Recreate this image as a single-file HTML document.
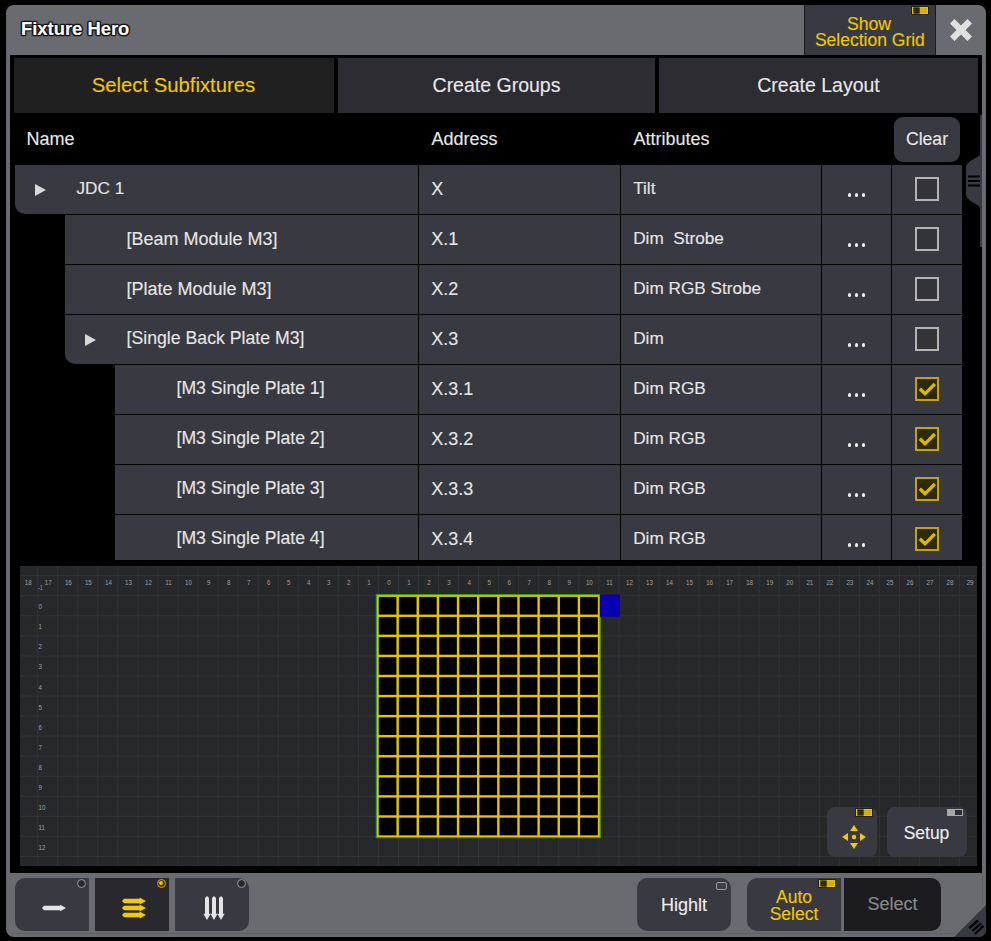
<!DOCTYPE html>
<html><head><meta charset="utf-8"><style>
html,body{margin:0;padding:0;background:#000;width:991px;height:941px;overflow:hidden;}
.r{position:absolute;}
.t{position:absolute;white-space:nowrap;line-height:1;font-family:"Liberation Sans", sans-serif;-webkit-text-stroke:0.12px currentColor;}
</style></head><body>
<div class="r" style="left:6px;top:5px;width:980px;height:932px;background:#6a6b70;border-radius:8px;"></div><div class="r" style="left:10px;top:55px;width:972px;height:818px;background:#000;"></div><div class="t" style="left:21.0px;top:20.2px;font-size:18.4px;color:#ffffff;font-weight:bold;text-shadow:1px 0 1px #111,-1px 0 1px #111,0 1px 1px #111,0 -1px 1px #111,1px 1px 1px #111,-1px -1px 1px #111,1px -1px 1px #111,-1px 1px 1px #111;">Fixture Hero</div><div class="r" style="left:804px;top:5px;width:1px;height:50px;background:#1a1a1e;"></div><div class="r" style="left:805px;top:5px;width:130px;height:50px;background:#393941;"></div><div class="r" style="left:935px;top:5px;width:1px;height:50px;background:#1a1a1e;"></div><div class="t" style="left:804.0px;width:130px;text-align:center;top:16.0px;font-size:17.7px;color:#f2c800;font-weight:normal;">Show</div><div class="t" style="left:804.9px;width:130px;text-align:center;top:32.2px;font-size:17.5px;color:#f2c800;font-weight:normal;">Selection Grid</div><div class="r" style="left:912px;top:7px;width:15.8px;height:7.3px;box-sizing:border-box;border:1px solid #e8c400;background:#d4b000;box-shadow:0 0 0 0.8px rgba(0,0,0,0.55)"><div class="r" style="left:0.8px;top:0.4px;width:5.6px;height:4.6px;background:#2e2a06;box-shadow:0 0 0 0.6px #1a1600"></div></div><svg class="r" style="left:950px;top:19px" width="22" height="22" viewBox="0 0 22 22"><path d="M4.5 0 L11 6.5 L17.5 0 L22 4.5 L15.5 11 L22 17.5 L17.5 22 L11 15.5 L4.5 22 L0 17.5 L6.5 11 L0 4.5 Z" fill="#e0e0e0"/></svg><div class="r" style="left:14px;top:58px;width:320px;height:55px;background:#202020;"></div><div class="r" style="left:338px;top:58px;width:317px;height:55px;background:#2c2c32;"></div><div class="r" style="left:659px;top:58px;width:319px;height:55px;background:#2c2c32;"></div><div class="t" style="left:13.4px;width:320px;text-align:center;top:75.1px;font-size:20.3px;color:#f2c800;font-weight:normal;">Select Subfixtures</div><div class="t" style="left:338.0px;width:317px;text-align:center;top:75.7px;font-size:19.5px;color:#e8e8e8;font-weight:normal;">Create Groups</div><div class="t" style="left:659.0px;width:319px;text-align:center;top:75.7px;font-size:19.5px;color:#e8e8e8;font-weight:normal;">Create Layout</div><div class="t" style="left:26.5px;top:129.5px;font-size:18px;color:#e8e8e8;font-weight:normal;">Name</div><div class="t" style="left:431.5px;top:129.5px;font-size:18px;color:#e8e8e8;font-weight:normal;">Address</div><div class="t" style="left:633.5px;top:129.5px;font-size:18px;color:#e8e8e8;font-weight:normal;">Attributes</div><div class="r" style="left:894px;top:117px;width:66px;height:45px;background:#393941;border-radius:9px;"></div><div class="t" style="left:894.0px;width:66px;text-align:center;top:130.7px;font-size:17.6px;color:#e8e8e8;font-weight:normal;">Clear</div><div class="r" style="left:980px;top:115px;width:2px;height:132px;background:#393941;"></div><svg class="r" style="left:964px;top:150px" width="18" height="62" viewBox="0 0 18 62"><path d="M16 0 L16 4 C 16 8, 2 10, 2 18 L2 44 C 2 52, 16 54, 16 58 L16 62 L18 62 L18 0 Z" fill="#393941"/><rect x="4" y="25.5" width="12" height="2" fill="#000"/><rect x="4" y="30" width="12" height="2" fill="#000"/><rect x="4" y="34.5" width="12" height="2" fill="#000"/></svg><div class="r" style="left:0;top:165px;width:991px;height:395px;overflow:hidden"><div class="r" style="left:15px;top:0px;width:403px;height:49px;background:#393941;border-bottom-left-radius:10px;"></div><div class="r" style="left:419px;top:0px;width:201px;height:49px;background:#393941;"></div><div class="r" style="left:621px;top:0px;width:200px;height:49px;background:#393941;"></div><div class="r" style="left:822px;top:0px;width:69px;height:49px;background:#393941;"></div><div class="r" style="left:892px;top:0px;width:70px;height:49px;background:#393941;"></div><svg class="r" style="left:35px;top:19px" width="11" height="12" viewBox="0 0 11 12"><path d="M0 0 L11 6 L0 12 Z" fill="#d8d8d8"/></svg><div class="t" style="left:76.5px;top:15.2px;font-size:17.2px;color:#e6e6e6;font-weight:normal;">JDC 1</div><div class="t" style="left:431.2px;top:14.6px;font-size:18px;color:#e6e6e6;font-weight:normal;">X</div><div class="t" style="left:633.2px;top:15.2px;font-size:17.2px;color:#e6e6e6;font-weight:normal;white-space:pre;">Tilt</div><div class="r" style="left:847.7px;top:28.2px;width:3.6px;height:3.6px;border-radius:50%;background:#f0f0f0"></div><div class="r" style="left:854.7px;top:28.2px;width:3.6px;height:3.6px;border-radius:50%;background:#f0f0f0"></div><div class="r" style="left:861.7px;top:28.2px;width:3.6px;height:3.6px;border-radius:50%;background:#f0f0f0"></div><div class="r" style="left:915px;top:12px;width:20px;height:20px;border:2px solid #b4b4b4;background:#333338"></div><div class="r" style="left:65px;top:50px;width:353px;height:49px;background:#393941;"></div><div class="r" style="left:419px;top:50px;width:201px;height:49px;background:#393941;"></div><div class="r" style="left:621px;top:50px;width:200px;height:49px;background:#393941;"></div><div class="r" style="left:822px;top:50px;width:69px;height:49px;background:#393941;"></div><div class="r" style="left:892px;top:50px;width:70px;height:49px;background:#393941;"></div><div class="t" style="left:126.5px;top:64.6px;font-size:18px;color:#e6e6e6;font-weight:normal;">[Beam Module M3]</div><div class="t" style="left:431.2px;top:64.6px;font-size:18px;color:#e6e6e6;font-weight:normal;">X.1</div><div class="t" style="left:633.2px;top:65.2px;font-size:17.2px;color:#e6e6e6;font-weight:normal;white-space:pre;">Dim&nbsp; Strobe</div><div class="r" style="left:847.7px;top:78.2px;width:3.6px;height:3.6px;border-radius:50%;background:#f0f0f0"></div><div class="r" style="left:854.7px;top:78.2px;width:3.6px;height:3.6px;border-radius:50%;background:#f0f0f0"></div><div class="r" style="left:861.7px;top:78.2px;width:3.6px;height:3.6px;border-radius:50%;background:#f0f0f0"></div><div class="r" style="left:915px;top:62px;width:20px;height:20px;border:2px solid #b4b4b4;background:#333338"></div><div class="r" style="left:65px;top:100px;width:353px;height:49px;background:#393941;"></div><div class="r" style="left:419px;top:100px;width:201px;height:49px;background:#393941;"></div><div class="r" style="left:621px;top:100px;width:200px;height:49px;background:#393941;"></div><div class="r" style="left:822px;top:100px;width:69px;height:49px;background:#393941;"></div><div class="r" style="left:892px;top:100px;width:70px;height:49px;background:#393941;"></div><div class="t" style="left:126.5px;top:114.6px;font-size:18px;color:#e6e6e6;font-weight:normal;">[Plate Module M3]</div><div class="t" style="left:431.2px;top:114.6px;font-size:18px;color:#e6e6e6;font-weight:normal;">X.2</div><div class="t" style="left:633.2px;top:115.2px;font-size:17.2px;color:#e6e6e6;font-weight:normal;white-space:pre;">Dim RGB Strobe</div><div class="r" style="left:847.7px;top:128.2px;width:3.6px;height:3.6px;border-radius:50%;background:#f0f0f0"></div><div class="r" style="left:854.7px;top:128.2px;width:3.6px;height:3.6px;border-radius:50%;background:#f0f0f0"></div><div class="r" style="left:861.7px;top:128.2px;width:3.6px;height:3.6px;border-radius:50%;background:#f0f0f0"></div><div class="r" style="left:915px;top:112px;width:20px;height:20px;border:2px solid #b4b4b4;background:#333338"></div><div class="r" style="left:65px;top:150px;width:353px;height:49px;background:#393941;border-bottom-left-radius:10px;"></div><div class="r" style="left:419px;top:150px;width:201px;height:49px;background:#393941;"></div><div class="r" style="left:621px;top:150px;width:200px;height:49px;background:#393941;"></div><div class="r" style="left:822px;top:150px;width:69px;height:49px;background:#393941;"></div><div class="r" style="left:892px;top:150px;width:70px;height:49px;background:#393941;"></div><svg class="r" style="left:85px;top:169px" width="11" height="12" viewBox="0 0 11 12"><path d="M0 0 L11 6 L0 12 Z" fill="#d8d8d8"/></svg><div class="t" style="left:126.5px;top:164.8px;font-size:17.7px;color:#e6e6e6;font-weight:normal;">[Single Back Plate M3]</div><div class="t" style="left:431.2px;top:164.6px;font-size:18px;color:#e6e6e6;font-weight:normal;">X.3</div><div class="t" style="left:633.2px;top:165.2px;font-size:17.2px;color:#e6e6e6;font-weight:normal;white-space:pre;">Dim</div><div class="r" style="left:847.7px;top:178.2px;width:3.6px;height:3.6px;border-radius:50%;background:#f0f0f0"></div><div class="r" style="left:854.7px;top:178.2px;width:3.6px;height:3.6px;border-radius:50%;background:#f0f0f0"></div><div class="r" style="left:861.7px;top:178.2px;width:3.6px;height:3.6px;border-radius:50%;background:#f0f0f0"></div><div class="r" style="left:915px;top:162px;width:20px;height:20px;border:2px solid #b4b4b4;background:#333338"></div><div class="r" style="left:115px;top:200px;width:303px;height:49px;background:#393941;"></div><div class="r" style="left:419px;top:200px;width:201px;height:49px;background:#393941;"></div><div class="r" style="left:621px;top:200px;width:200px;height:49px;background:#393941;"></div><div class="r" style="left:822px;top:200px;width:69px;height:49px;background:#393941;"></div><div class="r" style="left:892px;top:200px;width:70px;height:49px;background:#393941;"></div><div class="t" style="left:176.5px;top:214.9px;font-size:17.65px;color:#e6e6e6;font-weight:normal;">[M3 Single Plate 1]</div><div class="t" style="left:431.2px;top:214.6px;font-size:18px;color:#e6e6e6;font-weight:normal;">X.3.1</div><div class="t" style="left:633.2px;top:215.2px;font-size:17.2px;color:#e6e6e6;font-weight:normal;white-space:pre;">Dim RGB</div><div class="r" style="left:847.7px;top:228.2px;width:3.6px;height:3.6px;border-radius:50%;background:#f0f0f0"></div><div class="r" style="left:854.7px;top:228.2px;width:3.6px;height:3.6px;border-radius:50%;background:#f0f0f0"></div><div class="r" style="left:861.7px;top:228.2px;width:3.6px;height:3.6px;border-radius:50%;background:#f0f0f0"></div><div class="r" style="left:915px;top:212px;width:20px;height:20px;border:2px solid #c2a314;background:#2e2a06"></div><svg class="r" style="left:915px;top:212px" width="24" height="24" viewBox="0 0 24 24"><path d="M4.8 11.8 L10 16.8 L19.8 7" stroke="#dcb800" stroke-width="3.3" fill="none"/></svg><div class="r" style="left:115px;top:250px;width:303px;height:49px;background:#393941;"></div><div class="r" style="left:419px;top:250px;width:201px;height:49px;background:#393941;"></div><div class="r" style="left:621px;top:250px;width:200px;height:49px;background:#393941;"></div><div class="r" style="left:822px;top:250px;width:69px;height:49px;background:#393941;"></div><div class="r" style="left:892px;top:250px;width:70px;height:49px;background:#393941;"></div><div class="t" style="left:176.5px;top:264.9px;font-size:17.65px;color:#e6e6e6;font-weight:normal;">[M3 Single Plate 2]</div><div class="t" style="left:431.2px;top:264.6px;font-size:18px;color:#e6e6e6;font-weight:normal;">X.3.2</div><div class="t" style="left:633.2px;top:265.2px;font-size:17.2px;color:#e6e6e6;font-weight:normal;white-space:pre;">Dim RGB</div><div class="r" style="left:847.7px;top:278.2px;width:3.6px;height:3.6px;border-radius:50%;background:#f0f0f0"></div><div class="r" style="left:854.7px;top:278.2px;width:3.6px;height:3.6px;border-radius:50%;background:#f0f0f0"></div><div class="r" style="left:861.7px;top:278.2px;width:3.6px;height:3.6px;border-radius:50%;background:#f0f0f0"></div><div class="r" style="left:915px;top:262px;width:20px;height:20px;border:2px solid #c2a314;background:#2e2a06"></div><svg class="r" style="left:915px;top:262px" width="24" height="24" viewBox="0 0 24 24"><path d="M4.8 11.8 L10 16.8 L19.8 7" stroke="#dcb800" stroke-width="3.3" fill="none"/></svg><div class="r" style="left:115px;top:300px;width:303px;height:49px;background:#393941;"></div><div class="r" style="left:419px;top:300px;width:201px;height:49px;background:#393941;"></div><div class="r" style="left:621px;top:300px;width:200px;height:49px;background:#393941;"></div><div class="r" style="left:822px;top:300px;width:69px;height:49px;background:#393941;"></div><div class="r" style="left:892px;top:300px;width:70px;height:49px;background:#393941;"></div><div class="t" style="left:176.5px;top:314.9px;font-size:17.65px;color:#e6e6e6;font-weight:normal;">[M3 Single Plate 3]</div><div class="t" style="left:431.2px;top:314.6px;font-size:18px;color:#e6e6e6;font-weight:normal;">X.3.3</div><div class="t" style="left:633.2px;top:315.2px;font-size:17.2px;color:#e6e6e6;font-weight:normal;white-space:pre;">Dim RGB</div><div class="r" style="left:847.7px;top:328.2px;width:3.6px;height:3.6px;border-radius:50%;background:#f0f0f0"></div><div class="r" style="left:854.7px;top:328.2px;width:3.6px;height:3.6px;border-radius:50%;background:#f0f0f0"></div><div class="r" style="left:861.7px;top:328.2px;width:3.6px;height:3.6px;border-radius:50%;background:#f0f0f0"></div><div class="r" style="left:915px;top:312px;width:20px;height:20px;border:2px solid #c2a314;background:#2e2a06"></div><svg class="r" style="left:915px;top:312px" width="24" height="24" viewBox="0 0 24 24"><path d="M4.8 11.8 L10 16.8 L19.8 7" stroke="#dcb800" stroke-width="3.3" fill="none"/></svg><div class="r" style="left:115px;top:350px;width:303px;height:49px;background:#393941;"></div><div class="r" style="left:419px;top:350px;width:201px;height:49px;background:#393941;"></div><div class="r" style="left:621px;top:350px;width:200px;height:49px;background:#393941;"></div><div class="r" style="left:822px;top:350px;width:69px;height:49px;background:#393941;"></div><div class="r" style="left:892px;top:350px;width:70px;height:49px;background:#393941;"></div><div class="t" style="left:176.5px;top:364.9px;font-size:17.65px;color:#e6e6e6;font-weight:normal;">[M3 Single Plate 4]</div><div class="t" style="left:431.2px;top:364.6px;font-size:18px;color:#e6e6e6;font-weight:normal;">X.3.4</div><div class="t" style="left:633.2px;top:365.2px;font-size:17.2px;color:#e6e6e6;font-weight:normal;white-space:pre;">Dim RGB</div><div class="r" style="left:847.7px;top:378.2px;width:3.6px;height:3.6px;border-radius:50%;background:#f0f0f0"></div><div class="r" style="left:854.7px;top:378.2px;width:3.6px;height:3.6px;border-radius:50%;background:#f0f0f0"></div><div class="r" style="left:861.7px;top:378.2px;width:3.6px;height:3.6px;border-radius:50%;background:#f0f0f0"></div><div class="r" style="left:915px;top:362px;width:20px;height:20px;border:2px solid #c2a314;background:#2e2a06"></div><svg class="r" style="left:915px;top:362px" width="24" height="24" viewBox="0 0 24 24"><path d="M4.8 11.8 L10 16.8 L19.8 7" stroke="#dcb800" stroke-width="3.3" fill="none"/></svg></div><svg class="r" style="left:20px;top:566px" width="957" height="300" viewBox="20 566 957 300"><rect x="20" y="566" width="957" height="300" fill="#27282a"/><rect x="37.20" y="566" width="1" height="300" fill="#323338"/><rect x="57.24" y="566" width="1" height="300" fill="#323338"/><rect x="77.28" y="566" width="1" height="300" fill="#323338"/><rect x="97.32" y="566" width="1" height="300" fill="#323338"/><rect x="117.36" y="566" width="1" height="300" fill="#323338"/><rect x="137.40" y="566" width="1" height="300" fill="#323338"/><rect x="157.44" y="566" width="1" height="300" fill="#323338"/><rect x="177.48" y="566" width="1" height="300" fill="#323338"/><rect x="197.52" y="566" width="1" height="300" fill="#323338"/><rect x="217.56" y="566" width="1" height="300" fill="#323338"/><rect x="237.60" y="566" width="1" height="300" fill="#323338"/><rect x="257.64" y="566" width="1" height="300" fill="#323338"/><rect x="277.68" y="566" width="1" height="300" fill="#323338"/><rect x="297.72" y="566" width="1" height="300" fill="#323338"/><rect x="317.76" y="566" width="1" height="300" fill="#323338"/><rect x="337.80" y="566" width="1" height="300" fill="#323338"/><rect x="357.84" y="566" width="1" height="300" fill="#323338"/><rect x="377.88" y="566" width="1" height="300" fill="#323338"/><rect x="397.92" y="566" width="1" height="300" fill="#323338"/><rect x="417.96" y="566" width="1" height="300" fill="#323338"/><rect x="438.00" y="566" width="1" height="300" fill="#323338"/><rect x="458.04" y="566" width="1" height="300" fill="#323338"/><rect x="478.08" y="566" width="1" height="300" fill="#323338"/><rect x="498.12" y="566" width="1" height="300" fill="#323338"/><rect x="518.16" y="566" width="1" height="300" fill="#323338"/><rect x="538.20" y="566" width="1" height="300" fill="#323338"/><rect x="558.24" y="566" width="1" height="300" fill="#323338"/><rect x="578.28" y="566" width="1" height="300" fill="#323338"/><rect x="598.32" y="566" width="1" height="300" fill="#323338"/><rect x="618.36" y="566" width="1" height="300" fill="#323338"/><rect x="638.40" y="566" width="1" height="300" fill="#323338"/><rect x="658.44" y="566" width="1" height="300" fill="#323338"/><rect x="678.48" y="566" width="1" height="300" fill="#323338"/><rect x="698.52" y="566" width="1" height="300" fill="#323338"/><rect x="718.56" y="566" width="1" height="300" fill="#323338"/><rect x="738.60" y="566" width="1" height="300" fill="#323338"/><rect x="758.64" y="566" width="1" height="300" fill="#323338"/><rect x="778.68" y="566" width="1" height="300" fill="#323338"/><rect x="798.72" y="566" width="1" height="300" fill="#323338"/><rect x="818.76" y="566" width="1" height="300" fill="#323338"/><rect x="838.80" y="566" width="1" height="300" fill="#323338"/><rect x="858.84" y="566" width="1" height="300" fill="#323338"/><rect x="878.88" y="566" width="1" height="300" fill="#323338"/><rect x="898.92" y="566" width="1" height="300" fill="#323338"/><rect x="918.96" y="566" width="1" height="300" fill="#323338"/><rect x="939.00" y="566" width="1" height="300" fill="#323338"/><rect x="959.04" y="566" width="1" height="300" fill="#323338"/><rect x="20" y="575.20" width="957" height="1" fill="#323338"/><rect x="20" y="595.25" width="957" height="1" fill="#323338"/><rect x="20" y="615.30" width="957" height="1" fill="#323338"/><rect x="20" y="635.35" width="957" height="1" fill="#323338"/><rect x="20" y="655.40" width="957" height="1" fill="#323338"/><rect x="20" y="675.45" width="957" height="1" fill="#323338"/><rect x="20" y="695.50" width="957" height="1" fill="#323338"/><rect x="20" y="715.55" width="957" height="1" fill="#323338"/><rect x="20" y="735.60" width="957" height="1" fill="#323338"/><rect x="20" y="755.65" width="957" height="1" fill="#323338"/><rect x="20" y="775.70" width="957" height="1" fill="#323338"/><rect x="20" y="795.75" width="957" height="1" fill="#323338"/><rect x="20" y="815.80" width="957" height="1" fill="#323338"/><rect x="20" y="835.85" width="957" height="1" fill="#323338"/><rect x="20" y="855.90" width="957" height="1" fill="#323338"/><text transform="translate(28.2,585.3) scale(0.78,1)" font-size="7.9" fill="#a0a0a0" text-anchor="middle" font-family="Liberation Sans">18</text><text transform="translate(48.2,585.3) scale(0.78,1)" font-size="7.9" fill="#a0a0a0" text-anchor="middle" font-family="Liberation Sans">17</text><text transform="translate(68.3,585.3) scale(0.78,1)" font-size="7.9" fill="#a0a0a0" text-anchor="middle" font-family="Liberation Sans">16</text><text transform="translate(88.3,585.3) scale(0.78,1)" font-size="7.9" fill="#a0a0a0" text-anchor="middle" font-family="Liberation Sans">15</text><text transform="translate(108.4,585.3) scale(0.78,1)" font-size="7.9" fill="#a0a0a0" text-anchor="middle" font-family="Liberation Sans">14</text><text transform="translate(128.4,585.3) scale(0.78,1)" font-size="7.9" fill="#a0a0a0" text-anchor="middle" font-family="Liberation Sans">13</text><text transform="translate(148.4,585.3) scale(0.78,1)" font-size="7.9" fill="#a0a0a0" text-anchor="middle" font-family="Liberation Sans">12</text><text transform="translate(168.5,585.3) scale(0.78,1)" font-size="7.9" fill="#a0a0a0" text-anchor="middle" font-family="Liberation Sans">11</text><text transform="translate(188.5,585.3) scale(0.78,1)" font-size="7.9" fill="#a0a0a0" text-anchor="middle" font-family="Liberation Sans">10</text><text transform="translate(208.6,585.3) scale(0.78,1)" font-size="7.9" fill="#a0a0a0" text-anchor="middle" font-family="Liberation Sans">9</text><text transform="translate(228.6,585.3) scale(0.78,1)" font-size="7.9" fill="#a0a0a0" text-anchor="middle" font-family="Liberation Sans">8</text><text transform="translate(248.6,585.3) scale(0.78,1)" font-size="7.9" fill="#a0a0a0" text-anchor="middle" font-family="Liberation Sans">7</text><text transform="translate(268.7,585.3) scale(0.78,1)" font-size="7.9" fill="#a0a0a0" text-anchor="middle" font-family="Liberation Sans">6</text><text transform="translate(288.7,585.3) scale(0.78,1)" font-size="7.9" fill="#a0a0a0" text-anchor="middle" font-family="Liberation Sans">5</text><text transform="translate(308.8,585.3) scale(0.78,1)" font-size="7.9" fill="#a0a0a0" text-anchor="middle" font-family="Liberation Sans">4</text><text transform="translate(328.8,585.3) scale(0.78,1)" font-size="7.9" fill="#a0a0a0" text-anchor="middle" font-family="Liberation Sans">3</text><text transform="translate(348.8,585.3) scale(0.78,1)" font-size="7.9" fill="#a0a0a0" text-anchor="middle" font-family="Liberation Sans">2</text><text transform="translate(368.9,585.3) scale(0.78,1)" font-size="7.9" fill="#a0a0a0" text-anchor="middle" font-family="Liberation Sans">1</text><text transform="translate(388.9,585.3) scale(0.78,1)" font-size="7.9" fill="#a0a0a0" text-anchor="middle" font-family="Liberation Sans">0</text><text transform="translate(409.0,585.3) scale(0.78,1)" font-size="7.9" fill="#a0a0a0" text-anchor="middle" font-family="Liberation Sans">1</text><text transform="translate(429.0,585.3) scale(0.78,1)" font-size="7.9" fill="#a0a0a0" text-anchor="middle" font-family="Liberation Sans">2</text><text transform="translate(449.0,585.3) scale(0.78,1)" font-size="7.9" fill="#a0a0a0" text-anchor="middle" font-family="Liberation Sans">3</text><text transform="translate(469.1,585.3) scale(0.78,1)" font-size="7.9" fill="#a0a0a0" text-anchor="middle" font-family="Liberation Sans">4</text><text transform="translate(489.1,585.3) scale(0.78,1)" font-size="7.9" fill="#a0a0a0" text-anchor="middle" font-family="Liberation Sans">5</text><text transform="translate(509.2,585.3) scale(0.78,1)" font-size="7.9" fill="#a0a0a0" text-anchor="middle" font-family="Liberation Sans">6</text><text transform="translate(529.2,585.3) scale(0.78,1)" font-size="7.9" fill="#a0a0a0" text-anchor="middle" font-family="Liberation Sans">7</text><text transform="translate(549.2,585.3) scale(0.78,1)" font-size="7.9" fill="#a0a0a0" text-anchor="middle" font-family="Liberation Sans">8</text><text transform="translate(569.3,585.3) scale(0.78,1)" font-size="7.9" fill="#a0a0a0" text-anchor="middle" font-family="Liberation Sans">9</text><text transform="translate(589.3,585.3) scale(0.78,1)" font-size="7.9" fill="#a0a0a0" text-anchor="middle" font-family="Liberation Sans">10</text><text transform="translate(609.4,585.3) scale(0.78,1)" font-size="7.9" fill="#a0a0a0" text-anchor="middle" font-family="Liberation Sans">11</text><text transform="translate(629.4,585.3) scale(0.78,1)" font-size="7.9" fill="#a0a0a0" text-anchor="middle" font-family="Liberation Sans">12</text><text transform="translate(649.4,585.3) scale(0.78,1)" font-size="7.9" fill="#a0a0a0" text-anchor="middle" font-family="Liberation Sans">13</text><text transform="translate(669.5,585.3) scale(0.78,1)" font-size="7.9" fill="#a0a0a0" text-anchor="middle" font-family="Liberation Sans">14</text><text transform="translate(689.5,585.3) scale(0.78,1)" font-size="7.9" fill="#a0a0a0" text-anchor="middle" font-family="Liberation Sans">15</text><text transform="translate(709.6,585.3) scale(0.78,1)" font-size="7.9" fill="#a0a0a0" text-anchor="middle" font-family="Liberation Sans">16</text><text transform="translate(729.6,585.3) scale(0.78,1)" font-size="7.9" fill="#a0a0a0" text-anchor="middle" font-family="Liberation Sans">17</text><text transform="translate(749.6,585.3) scale(0.78,1)" font-size="7.9" fill="#a0a0a0" text-anchor="middle" font-family="Liberation Sans">18</text><text transform="translate(769.7,585.3) scale(0.78,1)" font-size="7.9" fill="#a0a0a0" text-anchor="middle" font-family="Liberation Sans">19</text><text transform="translate(789.7,585.3) scale(0.78,1)" font-size="7.9" fill="#a0a0a0" text-anchor="middle" font-family="Liberation Sans">20</text><text transform="translate(809.8,585.3) scale(0.78,1)" font-size="7.9" fill="#a0a0a0" text-anchor="middle" font-family="Liberation Sans">21</text><text transform="translate(829.8,585.3) scale(0.78,1)" font-size="7.9" fill="#a0a0a0" text-anchor="middle" font-family="Liberation Sans">22</text><text transform="translate(849.8,585.3) scale(0.78,1)" font-size="7.9" fill="#a0a0a0" text-anchor="middle" font-family="Liberation Sans">23</text><text transform="translate(869.9,585.3) scale(0.78,1)" font-size="7.9" fill="#a0a0a0" text-anchor="middle" font-family="Liberation Sans">24</text><text transform="translate(889.9,585.3) scale(0.78,1)" font-size="7.9" fill="#a0a0a0" text-anchor="middle" font-family="Liberation Sans">25</text><text transform="translate(910.0,585.3) scale(0.78,1)" font-size="7.9" fill="#a0a0a0" text-anchor="middle" font-family="Liberation Sans">26</text><text transform="translate(930.0,585.3) scale(0.78,1)" font-size="7.9" fill="#a0a0a0" text-anchor="middle" font-family="Liberation Sans">27</text><text transform="translate(950.0,585.3) scale(0.78,1)" font-size="7.9" fill="#a0a0a0" text-anchor="middle" font-family="Liberation Sans">28</text><text transform="translate(970.1,585.3) scale(0.78,1)" font-size="7.9" fill="#a0a0a0" text-anchor="middle" font-family="Liberation Sans">29</text><text transform="translate(38,589.5) scale(0.78,1)" font-size="7" fill="#a0a0a0" font-family="Liberation Sans">-1</text><text transform="translate(38.6,609.3) scale(0.78,1)" font-size="7.9" fill="#a0a0a0" font-family="Liberation Sans">0</text><text transform="translate(38.6,629.3) scale(0.78,1)" font-size="7.9" fill="#a0a0a0" font-family="Liberation Sans">1</text><text transform="translate(38.6,649.4) scale(0.78,1)" font-size="7.9" fill="#a0a0a0" font-family="Liberation Sans">2</text><text transform="translate(38.6,669.4) scale(0.78,1)" font-size="7.9" fill="#a0a0a0" font-family="Liberation Sans">3</text><text transform="translate(38.6,689.5) scale(0.78,1)" font-size="7.9" fill="#a0a0a0" font-family="Liberation Sans">4</text><text transform="translate(38.6,709.5) scale(0.78,1)" font-size="7.9" fill="#a0a0a0" font-family="Liberation Sans">5</text><text transform="translate(38.6,729.6) scale(0.78,1)" font-size="7.9" fill="#a0a0a0" font-family="Liberation Sans">6</text><text transform="translate(38.6,749.6) scale(0.78,1)" font-size="7.9" fill="#a0a0a0" font-family="Liberation Sans">7</text><text transform="translate(38.6,769.7) scale(0.78,1)" font-size="7.9" fill="#a0a0a0" font-family="Liberation Sans">8</text><text transform="translate(38.6,789.8) scale(0.78,1)" font-size="7.9" fill="#a0a0a0" font-family="Liberation Sans">9</text><text transform="translate(38.6,809.8) scale(0.78,1)" font-size="7.9" fill="#a0a0a0" font-family="Liberation Sans">10</text><text transform="translate(38.6,829.8) scale(0.78,1)" font-size="7.9" fill="#a0a0a0" font-family="Liberation Sans">11</text><text transform="translate(38.6,849.9) scale(0.78,1)" font-size="7.9" fill="#a0a0a0" font-family="Liberation Sans">12</text><rect x="376.5" y="594.5" width="223.5" height="243" fill="#000"/><rect x="376.30" y="594.5" width="2.4" height="243" fill="#e6c400"/><rect x="396.44" y="594.5" width="2.4" height="243" fill="#e6c400"/><rect x="416.58" y="594.5" width="2.4" height="243" fill="#e6c400"/><rect x="436.72" y="594.5" width="2.4" height="243" fill="#e6c400"/><rect x="456.86" y="594.5" width="2.4" height="243" fill="#e6c400"/><rect x="477.00" y="594.5" width="2.4" height="243" fill="#e6c400"/><rect x="497.14" y="594.5" width="2.4" height="243" fill="#e6c400"/><rect x="517.28" y="594.5" width="2.4" height="243" fill="#e6c400"/><rect x="537.42" y="594.5" width="2.4" height="243" fill="#e6c400"/><rect x="557.56" y="594.5" width="2.4" height="243" fill="#e6c400"/><rect x="577.70" y="594.5" width="2.4" height="243" fill="#e6c400"/><rect x="597.84" y="594.5" width="2.4" height="243" fill="#e6c400"/><rect x="376.5" y="594.50" width="223.5" height="2.4" fill="#e6c400"/><rect x="376.5" y="614.57" width="223.5" height="2.4" fill="#e6c400"/><rect x="376.5" y="634.64" width="223.5" height="2.4" fill="#e6c400"/><rect x="376.5" y="654.71" width="223.5" height="2.4" fill="#e6c400"/><rect x="376.5" y="674.78" width="223.5" height="2.4" fill="#e6c400"/><rect x="376.5" y="694.85" width="223.5" height="2.4" fill="#e6c400"/><rect x="376.5" y="714.92" width="223.5" height="2.4" fill="#e6c400"/><rect x="376.5" y="734.99" width="223.5" height="2.4" fill="#e6c400"/><rect x="376.5" y="755.06" width="223.5" height="2.4" fill="#e6c400"/><rect x="376.5" y="775.13" width="223.5" height="2.4" fill="#e6c400"/><rect x="376.5" y="795.20" width="223.5" height="2.4" fill="#e6c400"/><rect x="376.5" y="815.27" width="223.5" height="2.4" fill="#e6c400"/><rect x="376.5" y="835.34" width="223.5" height="2.4" fill="#e6c400"/><rect x="375.8" y="594" width="1.2" height="244" fill="#3a9a20"/><rect x="375.8" y="594" width="224.5" height="1.2" fill="#3a9a20"/><rect x="599.6" y="617" width="1.2" height="221" fill="#3a9a20"/><rect x="375.8" y="837" width="225" height="1.2" fill="#3a9a20"/><rect x="599.7" y="594.5" width="20.3" height="22.2" fill="#0800b0"/></svg><div class="r" style="left:827px;top:807px;width:50px;height:50px;background:#393941;border-radius:8px;"></div><div class="r" style="left:856px;top:809px;width:15.8px;height:7.3px;box-sizing:border-box;border:1px solid #e8c400;background:#d4b000;box-shadow:0 0 0 0.8px rgba(0,0,0,0.55)"><div class="r" style="left:0.8px;top:0.4px;width:5.6px;height:4.6px;background:#2e2a06;box-shadow:0 0 0 0.6px #1a1600"></div></div><svg class="r" style="left:841px;top:824px" width="26" height="26" viewBox="0 0 26 26"><path d="M13 1 L17 7 L9 7 Z M13 25 L17 19 L9 19 Z M1 13 L7 9 L7 17 Z M25 13 L19 9 L19 17 Z" fill="#f2c800"/><circle cx="13" cy="13" r="2.2" fill="#f2c800"/></svg><div class="r" style="left:887px;top:807px;width:80px;height:50px;background:#393941;border-radius:8px;"></div><div class="r" style="left:947px;top:809px;width:15.8px;height:7.3px;box-sizing:border-box;border:1px solid #a8a8a8;background:#2e2e34;"><div class="r" style="left:0px;top:0px;width:6.9px;height:5.3px;background:#a8a8a8"></div></div><div class="t" style="left:886.5px;width:80px;text-align:center;top:824.7px;font-size:17.5px;color:#eeeeee;font-weight:normal;">Setup</div><div class="r" style="left:15px;top:878px;width:74px;height:53px;background:#393941;border-top-left-radius:10px;border-bottom-left-radius:10px;"></div><div class="r" style="left:95px;top:878px;width:74px;height:53px;background:#28282e;"></div><div class="r" style="left:175px;top:878px;width:74px;height:53px;background:#393941;border-top-right-radius:10px;border-bottom-right-radius:10px;"></div><div class="r" style="left:76.5px;top:878.5px;width:7px;height:7px;border-radius:50%;border:1px solid #9a9a9a;background:#2a2a2e"></div><div class="r" style="left:156.5px;top:878.5px;width:7px;height:7px;border-radius:50%;border:1px solid #d8b000;background:#2a2a2e"><div class="r" style="left:1.5px;top:1.5px;width:4px;height:4px;border-radius:50%;background:#f2c800"></div></div><div class="r" style="left:236.5px;top:878.5px;width:7px;height:7px;border-radius:50%;border:1px solid #9a9a9a;background:#2a2a2e"></div><svg class="r" style="left:0;top:0" width="260" height="941"><path d="M42 908 L44 905.8 L60.2 905.8 L60.2 904.7 L66 908 L60.2 911.3 L60.2 910.2 L44 910.2 Z" fill="#e4e4e4"/><g fill="#f2cc00"><path d="M122 901 L124 898.8 L139.6 898.8 L139.6 897.4 L146 901 L139.6 904.6 L139.6 903.2 L124 903.2 Z"/><path d="M122 908 L124 905.8 L139.6 905.8 L139.6 904.4 L146 908 L139.6 911.6 L139.6 910.2 L124 910.2 Z"/><path d="M122 915 L124 912.8 L139.6 912.8 L139.6 911.4 L146 915 L139.6 918.6 L139.6 917.2 L124 917.2 Z"/></g><g fill="#e4e4e4"><path d="M207 896 L205 898 L205 913.8 L203.4 913.8 L207 920 L210.6 913.8 L209 913.8 L209 898 Z"/><path d="M214 896 L212 898 L212 913.8 L210.4 913.8 L214 920 L217.6 913.8 L216 913.8 L216 898 Z"/><path d="M221 896 L219 898 L219 913.8 L217.4 913.8 L221 920 L224.6 913.8 L223 913.8 L223 898 Z"/></g></svg><div class="r" style="left:637px;top:878px;width:94px;height:53px;background:#393941;border-radius:10px;"></div><div class="r" style="left:716px;top:882px;width:9px;height:5.5px;border:1.2px solid #9a9a9a;border-radius:2px;background:#404046"></div><div class="t" style="left:637.0px;width:94px;text-align:center;top:895.7px;font-size:18px;color:#eeeeee;font-weight:normal;">Highlt</div><div class="r" style="left:747px;top:878px;width:94px;height:53px;background:#393941;border-top-left-radius:10px;border-bottom-left-radius:10px;"></div><div class="r" style="left:819px;top:880px;width:15.8px;height:7.3px;box-sizing:border-box;border:1px solid #e8c400;background:#d4b000;box-shadow:0 0 0 0.8px rgba(0,0,0,0.55)"><div class="r" style="left:0.8px;top:0.4px;width:5.6px;height:4.6px;background:#2e2a06;box-shadow:0 0 0 0.6px #1a1600"></div></div><div class="t" style="left:747.0px;width:94px;text-align:center;top:889.2px;font-size:17.5px;color:#f2c800;font-weight:normal;">Auto</div><div class="t" style="left:747.0px;width:94px;text-align:center;top:905.7px;font-size:17.5px;color:#f2c800;font-weight:normal;">Select</div><div class="r" style="left:844px;top:878px;width:97px;height:53px;background:#1c1c20;border-top-right-radius:10px;border-bottom-right-radius:10px;"></div><div class="t" style="left:844.0px;width:97px;text-align:center;top:895.0px;font-size:18px;color:#8a8a8a;font-weight:normal;">Select</div><div class="r" style="left:10px;top:932.5px;width:944px;height:1.0px;background:#5e5f64;"></div><div class="r" style="left:982px;top:873px;width:1px;height:32px;background:#5e5f64;"></div><svg class="r" style="left:954px;top:905px" width="32" height="32" viewBox="0 0 32 32"><path d="M32 0 L32 24 Q32 32 24 32 L0 32 Z" fill="#393941"/><g stroke="#000" stroke-width="2.3"><path d="M15.3 23 L24.1 15.5"/><path d="M18.4 26 L26.9 18.3"/><path d="M21 29 L29.5 20.9"/></g></svg>
</body></html>
